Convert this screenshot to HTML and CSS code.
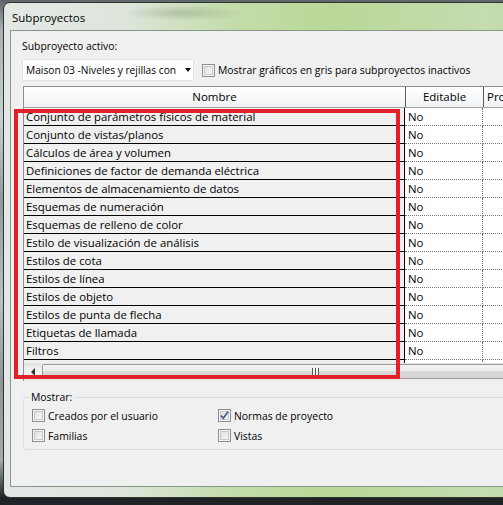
FILE: index.html
```html
<!DOCTYPE html>
<html>
<head>
<meta charset="utf-8">
<link rel="stylesheet" href="styles.css">
</head>
<body>
<div class="desktop">
  <div class="window">
    <div class="titlebar">Subproyectos</div>
    <div class="client">
      <div class="label">Subproyecto activo:</div>
      <div class="toprow">
        <div class="combo">
          <span class="combo-text">Maison 03 -Niveles y rejillas con</span>
          <span class="combo-arrow"></span>
        </div>
        <label class="check">
          <span class="box"></span>
          <span>Mostrar gráficos en gris para subproyectos inactivos</span>
        </label>
      </div>
      <div class="grid">
        <div class="ghead">
          <div class="c-name">Nombre</div>
          <div class="c-edit">Editable</div>
          <div class="c-owner">Pro</div>
        </div>
        <div class="gbody">
          <div class="grow"><div class="c-name">Conjunto de parámetros físicos de material</div><div class="c-edit">No</div><div class="c-owner"></div></div>
          <div class="grow"><div class="c-name">Conjunto de vistas/planos</div><div class="c-edit">No</div><div class="c-owner"></div></div>
          <div class="grow"><div class="c-name">Cálculos de área y volumen</div><div class="c-edit">No</div><div class="c-owner"></div></div>
          <div class="grow"><div class="c-name">Definiciones de factor de demanda eléctrica</div><div class="c-edit">No</div><div class="c-owner"></div></div>
          <div class="grow"><div class="c-name">Elementos de almacenamiento de datos</div><div class="c-edit">No</div><div class="c-owner"></div></div>
          <div class="grow"><div class="c-name">Esquemas de numeración</div><div class="c-edit">No</div><div class="c-owner"></div></div>
          <div class="grow"><div class="c-name">Esquemas de relleno de color</div><div class="c-edit">No</div><div class="c-owner"></div></div>
          <div class="grow"><div class="c-name">Estilo de visualización de análisis</div><div class="c-edit">No</div><div class="c-owner"></div></div>
          <div class="grow"><div class="c-name">Estilos de cota</div><div class="c-edit">No</div><div class="c-owner"></div></div>
          <div class="grow"><div class="c-name">Estilos de línea</div><div class="c-edit">No</div><div class="c-owner"></div></div>
          <div class="grow"><div class="c-name">Estilos de objeto</div><div class="c-edit">No</div><div class="c-owner"></div></div>
          <div class="grow"><div class="c-name">Estilos de punta de flecha</div><div class="c-edit">No</div><div class="c-owner"></div></div>
          <div class="grow"><div class="c-name">Etiquetas de llamada</div><div class="c-edit">No</div><div class="c-owner"></div></div>
          <div class="grow"><div class="c-name">Filtros</div><div class="c-edit">No</div><div class="c-owner"></div></div>
          <div class="grow"><div class="c-name">Fases de proyecto</div><div class="c-edit">No</div><div class="c-owner">BRBBB</div></div>
        </div>
        <div class="hscroll">
          <div class="sbtn"><span class="larrow"></span></div>
          <div class="thumb"><span class="grip"></span></div>
        </div>
      </div>
      <div class="group">
        <div class="legend">Mostrar:</div>
        <div class="opts">
          <label class="check"><span class="box"></span><span>Creados por el usuario</span></label>
          <label class="check"><span class="box checked"><svg width="11" height="11" viewBox="0 0 11 11"><path d="M2 5.5 L4.3 8.2 L9 1.8" fill="none" stroke="#4d5f95" stroke-width="1.8"/></svg></span><span>Normas de proyecto</span></label>
          <label class="check"><span class="box"></span><span>Familias</span></label>
          <label class="check"><span class="box"></span><span>Vistas</span></label>
        </div>
      </div>
    </div>
  </div>
  <div class="annot"></div>
</div>
</body>
</html>
```

FILE: styles.css
```css
html, body {
  margin: 0;
  padding: 0;
}
body {
  width: 503px;
  height: 505px;
  overflow: hidden;
  background: #1f2326;
  font-family: "Open Sans", "Noto Sans", sans-serif;
  font-size: 10.4px;
  color: #000;
}
.desktop {
  position: relative;
  width: 503px;
  height: 505px;
  overflow: hidden;
  background:
    linear-gradient(180deg, #5d6569 0px, #a9b1b4 30px, #c9cfd0 120px, #8e989c 200px, #b9c0c2 300px, #8b9597 380px, #a2aaad 460px, #1f2326 498px);
  padding-top: 2px;
  box-sizing: border-box;
}
.window {
  margin-left: 3px;
  width: 560px;
  height: 496px;
  box-sizing: border-box;
  border: 1px solid #2d3530;
  border-radius: 7px;
  background:
    radial-gradient(ellipse 60px 8px at 180px 10px, rgba(120,135,110,0.35), rgba(120,135,110,0) 100%),
    linear-gradient(90deg, #e3e8e5 0px, #dde5db 120px, #c4dca9 230px, #b9d898 330px, #c5dcaf 480px, #bcd79f 560px);
  padding-left: 6px;
  padding-bottom: 10px;
}
.titlebar {
  height: 27px;
  line-height: 29px;
  padding-left: 2px;
  font-size: 11.5px;
  color: #000;
}
.client {
  height: 457px;
  box-sizing: border-box;
  border: 1px solid #86978a;
  background: #f0f0f0;
  padding-left: 11px;
  padding-top: 7px;
}
.label {
  height: 16px;
  line-height: 16px;
}
.toprow {
  display: flex;
  align-items: center;
  margin-top: 5px;
  height: 22px;
}
.combo {
  width: 172px;
  height: 22px;
  box-sizing: border-box;
  background: #fff;
  border: 1px solid #e3e3e3;
  display: flex;
  align-items: center;
  padding-left: 3px;
}
.combo-text {
  flex: 1;
  white-space: nowrap;
  overflow: hidden;
  font-size: 10.2px;
}
.combo-arrow {
  width: 0;
  height: 0;
  border-left: 3.5px solid transparent;
  border-right: 3.5px solid transparent;
  border-top: 4px solid #111;
  margin-right: 2px;
  flex: none;
}
.check {
  display: flex;
  align-items: center;
  white-space: nowrap;
}
.toprow .check {
  margin-left: 8px;
}
.box {
  width: 13px;
  height: 13px;
  box-sizing: border-box;
  border: 1px solid #8e8f8f;
  background: linear-gradient(135deg, #d9dadb 0%, #eeeeee 55%, #fbfbfb 100%);
  box-shadow: inset 0 0 0 1px #f4f4f4, inset 0 0 0 2px #c6c9cc;
  margin-right: 3px;
  display: flex;
  align-items: center;
  justify-content: center;
  flex: none;
}
.box.checked svg {
  display: block;
}
.grid {
  margin-top: 5px;
  margin-left: 1px;
  border-top: 1px solid #8a8f96;
  border-left: 1px solid #8a8f96;
  width: 600px;
}
.ghead {
  display: flex;
  height: 21px;
  box-sizing: border-box;
  border-bottom: 1px solid #a0a0a0;
  background: linear-gradient(180deg, #ffffff 0%, #f7f8f9 60%, #f0f1f2 100%);
  line-height: 20px;
  font-size: 11.5px;
}
.ghead .c-name {
  width: 381px;
  text-align: center;
  border-right: 1px solid #5a5a5a;
}
.ghead .c-edit {
  width: 77px;
  text-align: center;
  border-right: 1px solid #5a5a5a;
}
.ghead .c-owner {
  padding-left: 3px;
}
.gbody {
  height: 255px;
  overflow: hidden;
  font-size: 11.4px;
}
.grow {
  display: flex;
  height: 18px;
  line-height: 17px;
}
.grow .c-name {
  width: 381px;
  box-sizing: border-box;
  background: #f0f0f0;
  border-bottom: 1px solid #000;
  border-right: 1px solid #000;
  padding-left: 2px;
  white-space: nowrap;
  overflow: hidden;
  height: 18px;
}
.grow .c-edit {
  width: 78px;
  box-sizing: border-box;
  background: #fff;
  border-bottom: 1px dotted #777;
  border-right: 1px dotted #777;
  padding-left: 3px;
  height: 18px;
}
.grow .c-owner {
  flex: 1;
  background: #fff;
  border-bottom: 1px dotted #777;
  height: 18px;
  box-sizing: border-box;
  padding-left: 2px;
}
.hscroll {
  height: 17px;
  display: flex;
  background: linear-gradient(180deg, #e3e3e3 0%, #f1f1f1 40%, #f1f1f1 100%);
  border-bottom: 1px solid #e8e8e8;
}
.sbtn {
  width: 17px;
  height: 17px;
  display: flex;
  align-items: center;
  justify-content: center;
}
.larrow {
  width: 0;
  height: 0;
  border-top: 4px solid transparent;
  border-bottom: 4px solid transparent;
  border-right: 4px solid #333;
}
.thumb {
  flex: 1;
  height: 15px;
  margin-top: 1px;
  margin-left: 1px;
  box-sizing: border-box;
  border: 1px solid #9a9a9a;
  border-radius: 2px;
  background: linear-gradient(180deg, #f5f5f5 0%, #ececec 45%, #d9d9d9 50%, #d4d4d4 100%);
  position: relative;
}
.grip {
  position: absolute;
  left: 269px;
  top: 3px;
  width: 7px;
  height: 7px;
  background: repeating-linear-gradient(90deg, #555 0 1px, #f2f2f2 1px 3px);
}
.group {
  margin: 16px 0 0 1px;
  padding: 0 0 0 8px;
  border: 1px solid #d5dfe5;
  border-radius: 3px;
  height: 53px;
  box-sizing: border-box;
  width: 600px;
}
.legend {
  display: table;
  margin: -8px 0 0 -3px;
  padding: 0 2px;
  line-height: 14px;
  height: 14px;
  background: #f0f0f0;
}
.opts {
  display: grid;
  grid-template-columns: 186px 200px;
  row-gap: 7px;
  margin-top: 5px;
}
.opts .check {
  height: 13px;
}
.annot {
  position: absolute;
  left: 14px;
  top: 109px;
  width: 386px;
  height: 270px;
  box-sizing: border-box;
  border: 4px solid #e3202a;
}
```
